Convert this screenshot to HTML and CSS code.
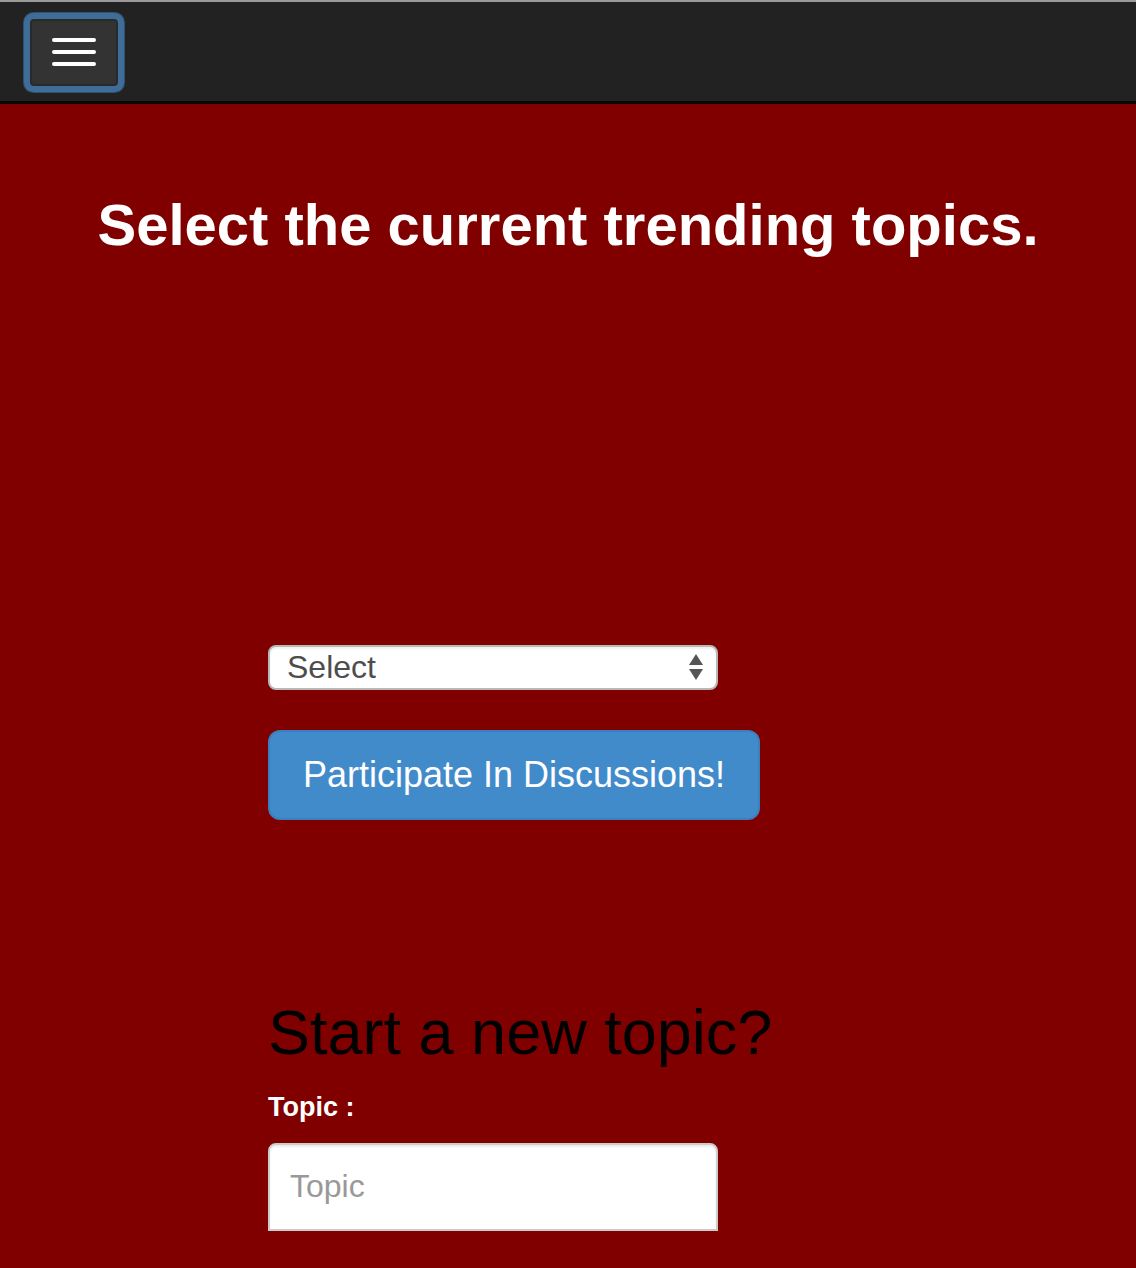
FILE: index.html
```html
<!DOCTYPE html>
<html>
<head>
<meta charset="utf-8">
<link rel="stylesheet" href="styles.css">
</head>
<body>
<nav class="navbar">
  <button class="toggle" type="button">
    <span class="bar"></span>
    <span class="bar"></span>
    <span class="bar"></span>
  </button>
</nav>
<main class="page">
  <h1 class="title">Select the current trending topics.</h1>
  <div class="column">
    <div class="select">
      <span class="select-text">Select</span>
      <svg class="arrows" width="16" height="28" viewBox="0 0 16 28">
        <path d="M8 1 L15 12 L1 12 Z" fill="#555"/>
        <path d="M1 16 L15 16 L8 27 Z" fill="#555"/>
      </svg>
    </div>
    <button class="btn" type="button">Participate In Discussions!</button>
    <h2 class="subtitle">Start a new topic?</h2>
    <label class="label">Topic :</label>
    <input class="input" type="text" placeholder="Topic">
  </div>
</main>
</body>
</html>
```

FILE: styles.css
```css
html, body {
  margin: 0;
  padding: 0;
}
body {
  background: #800000;
  font-family: "Liberation Sans", Arial, sans-serif;
  height: 1268px;
  overflow: hidden;
}
.navbar {
  height: 99px;
  background: #222222;
  border-top: 2px solid #9a9a9a;
  border-bottom: 3px solid #080808;
  display: flex;
  align-items: center;
  padding-left: 30px;
}
.toggle {
  width: 88px;
  height: 67px;
  background: #333333;
  border: 2px solid #2a2a2a;
  border-radius: 4px;
  box-shadow: 0 0 0 6px #3f6d9a, 0 0 0 7px #33506e;
  display: flex;
  flex-direction: column;
  align-items: center;
  justify-content: center;
  gap: 8px;
  padding: 0;
  margin-top: 1px;
}
.bar {
  display: block;
  width: 44px;
  height: 4px;
  border-radius: 2px;
  background: #ffffff;
}
.page {
  display: block;
}
.title {
  margin: 89px 0 0;
  text-align: center;
  color: #ffffff;
  font-size: 58px;
  font-weight: bold;
  line-height: 1.1;
}
.column {
  width: 600px;
  margin: 0 auto;
  display: flex;
  flex-direction: column;
  align-items: flex-start;
}
.select {
  margin-top: 388px;
  box-sizing: border-box;
  width: 450px;
  height: 45px;
  background: #ffffff;
  border: 2px solid #b8b8b8;
  border-radius: 8px;
  box-shadow: inset 0 2px 2px rgba(0,0,0,0.06);
  display: flex;
  align-items: center;
  justify-content: space-between;
  padding: 0 12px 0 17px;
}
.select-text {
  font-size: 32px;
  color: #4d4d4d;
  line-height: 1;
}
.arrows {
  display: block;
}
.btn {
  margin-top: 40px;
  box-sizing: border-box;
  width: 492px;
  height: 90px;
  background: #428bca;
  border: 2px solid #3a80bf;
  border-radius: 12px;
  color: #ffffff;
  font-family: "Liberation Sans", Arial, sans-serif;
  font-size: 36px;
  padding: 0 32px;
  text-align: center;
}
.subtitle {
  margin: 178px 0 0;
  color: #000000;
  font-size: 63px;
  font-weight: normal;
  line-height: 1.1;
}
.label {
  margin-top: 22px;
  color: #ffffff;
  font-size: 27px;
  font-weight: bold;
  line-height: 1.4;
}
.input {
  margin-top: 16px;
  box-sizing: border-box;
  width: 450px;
  height: 88px;
  background: #ffffff;
  border: 2px solid #cccccc;
  border-radius: 8px 8px 0 0;
  box-shadow: inset 0 2px 2px rgba(0,0,0,0.075);
  padding: 0 20px;
  font-family: "Liberation Sans", Arial, sans-serif;
  font-size: 32px;
  color: #555555;
}
.input::placeholder {
  color: #999999;
}
```
